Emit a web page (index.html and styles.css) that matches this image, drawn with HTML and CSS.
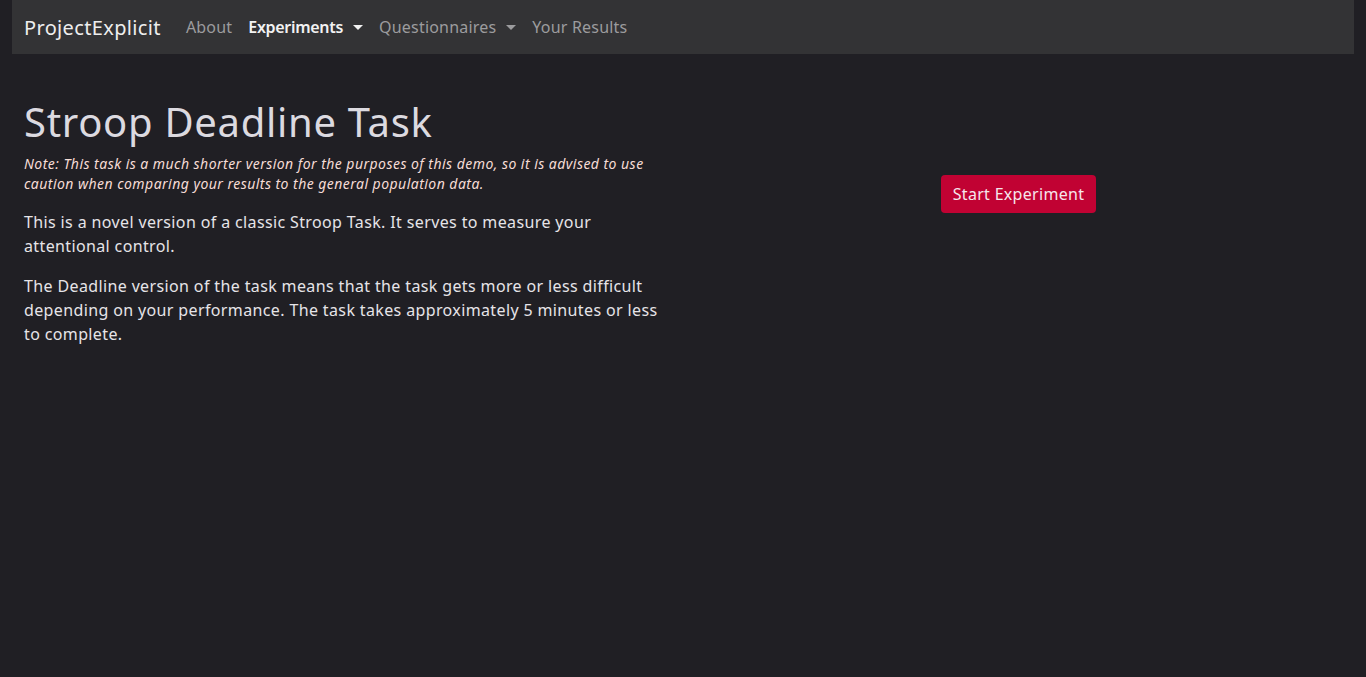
FILE: index.html
```html
<!DOCTYPE html>
<html lang="en">
<head>
<meta charset="utf-8">
<title>ProjectExplicit - Stroop Deadline Task</title>
<link rel="stylesheet" href="styles.css">
</head>
<body>
<div class="page">
  <nav class="navbar">
    <a class="brand" href="#">ProjectExplicit</a>
    <ul class="nav">
      <li><a class="nav-link" href="#">About</a></li>
      <li><a class="nav-link active dropdown" href="#">Experiments</a></li>
      <li><a class="nav-link dropdown" href="#">Questionnaires</a></li>
      <li><a class="nav-link" href="#">Your Results</a></li>
    </ul>
  </nav>
  <main class="row">
    <section class="col">
      <h1 class="title">Stroop Deadline Task</h1>
      <p class="note">Note: This task is a much shorter version for the purposes of this demo, so it is advised to use caution when comparing your results to the general population data.</p>
      <p class="text">This is a novel version of a classic Stroop Task. It serves to measure your attentional control.</p>
      <p class="text">The Deadline version of the task means that the task gets more or less difficult depending on your performance. The task takes approximately 5 minutes or less to complete.</p>
    </section>
    <section class="col col-center">
      <button class="btn-start" type="button">Start Experiment</button>
    </section>
  </main>
</div>
</body>
</html>
```
FILE: styles.css
```css
html, body {
  margin: 0;
  padding: 0;
  background: #201f24;
  height: 100%;
}
body {
  font-family: "Noto Sans", "DejaVu Sans", sans-serif;
  color: #e6e4e8;
}
.page {
  padding: 0 12px;
}
.navbar {
  display: flex;
  align-items: center;
  height: 54px;
  background: #333335;
  padding: 0 12px;
  box-sizing: border-box;
}
.brand {
  font-size: 20px;
  color: #eeeeee;
  text-decoration: none;
  margin-right: 17px;
  letter-spacing: 0.35px;
}
.nav {
  display: flex;
  list-style: none;
  margin: 0;
  padding: 0;
}
.nav-link {
  display: flex;
  align-items: center;
  padding: 0 8px;
  font-size: 16px;
  color: #9c9c9e;
  text-decoration: none;
  letter-spacing: 0.2px;
}
.nav-link.active {
  color: #f2f2f2;
  font-weight: 600;
  letter-spacing: -0.3px;
}
.dropdown::after {
  content: "";
  display: inline-block;
  margin-left: 10px;
  border-top: 5px solid currentColor;
  border-left: 5px solid transparent;
  border-right: 5px solid transparent;
}
.row {
  display: flex;
}
.col {
  flex: 1 1 0;
  padding: 0 12px;
}
.col-center {
  display: flex;
  justify-content: center;
  align-items: flex-start;
  padding-top: 121px;
}
.title {
  font-weight: 400;
  font-size: 40px;
  line-height: 48px;
  margin: 44px 0 8px;
  color: #dcdae0;
  letter-spacing: 0.7px;
}
.note {
  font-style: italic;
  font-size: 14px;
  line-height: 20px;
  color: #f6dcd6;
  margin: 0 0 16px;
  letter-spacing: 0.46px;
}
.text {
  font-size: 16px;
  line-height: 24px;
  margin: 0 0 16px;
  letter-spacing: 0.37px;
}
.btn-start {
  font-family: inherit;
  font-size: 16px;
  color: #f6e6ec;
  background: #c10233;
  border: none;
  border-radius: 4px;
  padding: 8px 12px;
  line-height: 22px;
  letter-spacing: 0.3px;
}
```
